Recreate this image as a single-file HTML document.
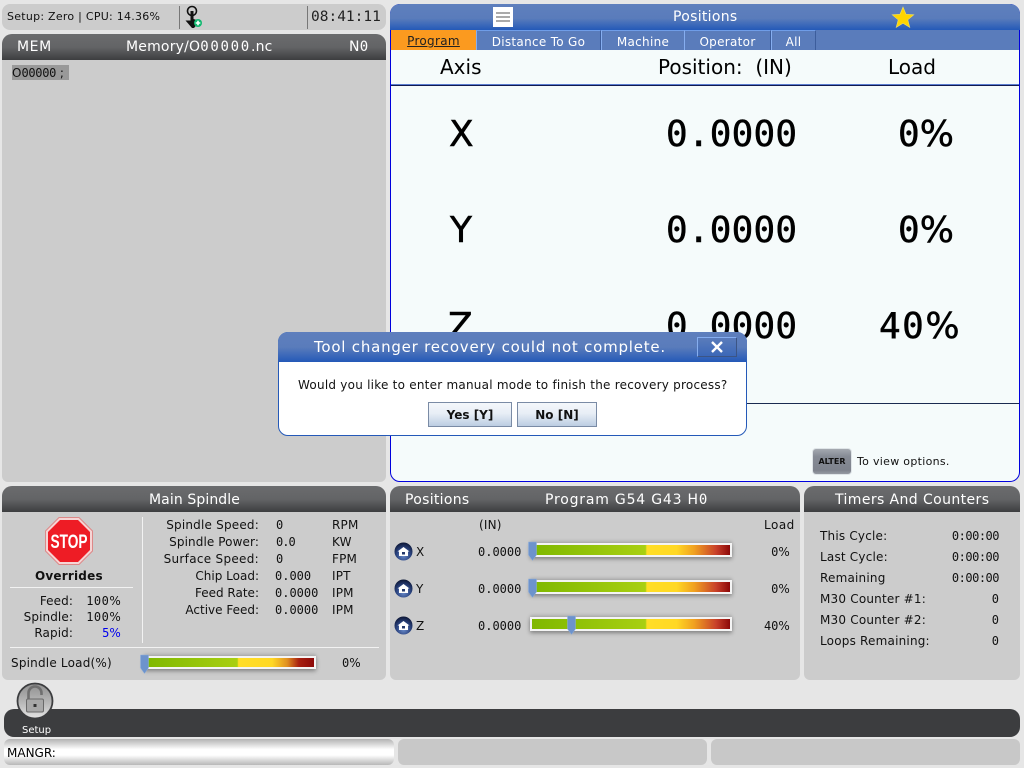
<!DOCTYPE html>
<html><head><meta charset="utf-8"><style>
html,body{margin:0;padding:0;width:1024px;height:768px;overflow:hidden;background:#e6e6e6}
body{position:relative;font-family:"DejaVu Sans","Liberation Sans",sans-serif;font-size:12px;color:#111}
div,svg{position:absolute}
.t{white-space:nowrap;line-height:16px;letter-spacing:.2px}
.t.m,span.m{font-family:"DejaVu Sans Mono","Liberation Mono",monospace;letter-spacing:0}
.r{text-align:right}
.p{background:#cccccc}
.h{background:linear-gradient(#6b6c6e 0,#636466 50%,#3c3d3f 100%);border-radius:10px 10px 0 0;color:#fff}
.h .t{font-size:14px;line-height:26px;top:0}
.lo .t{top:1px}
.bar{background:linear-gradient(90deg,#7fb800 0,#a8cf12 57%,#b5d416 57.5%,#ffde26 58%,#ffd824 73%,#f0a020 82%,#c8402a 93%,#8c0808 100%);border:2px solid #f4f4f4;box-sizing:border-box;box-shadow:0 2px 4px #808080,0 -2px 3px #b0b0b0}
.bar.s{background:linear-gradient(90deg,#7fb800 0,#a8cf12 54%,#b5d416 54.500%,#ffde26 55%,#ffd824 75%,#e09020 84%,#a82010 91%,#8c0808 100%)}
.tab{top:30px;height:20px;background:#5a7cbb;color:#fff;line-height:23px;text-align:center;font-size:12px;letter-spacing:.3px;border-left:1px solid #86aef0;border-top:1px solid #6f9de8;box-sizing:border-box;border-right:1px solid #3c5d9c}
.big{font-size:36px;line-height:44px;color:#000;white-space:nowrap;-webkit-text-stroke:.5px #000}
.big.m{font-family:"DejaVu Sans Mono","Liberation Mono",monospace;letter-spacing:.2px}
.btn{top:402px;height:25px;box-sizing:border-box;border:1px solid #7a8ba5;background:linear-gradient(#f4f7fb,#e8eef6 45%,#bccde2);font-weight:bold;font-size:12px;line-height:24px;text-align:center;color:#111}
</style></head><body>

<!-- status -->
<div class="p" style="left:2px;top:4px;width:384px;height:26px;border-radius:8px"></div>
<div class="t" style="left:7px;top:9px;font-size:11px;letter-spacing:.26px">Setup: Zero | CPU: 14.36%</div>
<div style="left:179px;top:6px;width:1px;height:23px;background:#777"></div>
<div style="left:307px;top:6px;width:1px;height:23px;background:#777"></div>
<svg style="left:184px;top:5px" width="20" height="23" viewBox="0 0 20 23"><circle cx="8" cy="6" r="4.500" fill="none" stroke="#111" stroke-width="1.600"/><path d="M6.500 6h3v8l4.500 1.500-1 4-3 3.500H8l-6.500-7.500H6.500z" fill="#111"/><circle cx="14" cy="18" r="4" fill="#12b870"/><path d="M14 15.700v4.600M11.700 18h4.600" stroke="#fff" stroke-width="1.600"/></svg>
<div class="t m" style="left:311px;top:9px;font-size:14.500px;color:#222">08:41:11</div>

<!-- program panel -->
<div class="p" style="left:2px;top:34px;width:384px;height:448px;border-radius:10px 10px 6px 6px"></div>
<div class="h" style="left:2px;top:34px;width:384px;height:26px">
<div class="t" style="left:15px;letter-spacing:.6px">MEM</div>
<div class="t" style="left:124px">Memory/O<span class="m" style="letter-spacing:1.700px">00000</span>.nc</div>
<div class="t" style="left:347px">N<span class="m">0</span></div>
</div>
<div style="left:12px;top:65px;width:57px;height:15px;background:#999"></div>
<div class="t" style="left:12px;top:65px;font-size:12px;letter-spacing:0">O<span class="m" style="letter-spacing:-.3px">00000</span> ;</div>

<!-- positions panel -->
<div style="left:390px;top:4px;width:630px;height:478px;box-sizing:border-box;background:#f5fbfb;border:1px solid #0000dd;border-radius:10px"></div>
<div style="left:390px;top:4px;width:630px;height:26px;border-radius:10px 10px 0 0;background:linear-gradient(#5e7fbd 0,#5a7cbb 55%,#2459b8 100%)"></div>
<div style="left:391px;top:30px;width:628px;height:20px;background:#5a7cbb"></div>
<div style="left:493px;top:7px;width:20px;height:20px;background:#fff"></div>
<div style="left:496px;top:12px;width:14px;height:2px;background:#aaa"></div>
<div style="left:496px;top:16px;width:14px;height:2px;background:#aaa"></div>
<div style="left:496px;top:20px;width:14px;height:2px;background:#aaa"></div>
<div class="t" style="left:673px;top:9px;font-size:14px;letter-spacing:.3px;color:#fff">Positions</div>
<svg style="left:891px;top:6px" width="24" height="22" viewBox="0 0 24 22"><path d="M12 1l3 7.300 7.800.5-6 5 2 7.600L12 17.200 5.200 21.400l2-7.600-6-5 7.800-.5z" fill="#ffd500" stroke="#f0e060" stroke-width=".6"/></svg>
<div class="tab" style="left:391px;width:85px;background:#fb9a1f;color:#222;border:0"><span style="text-decoration:underline">Program</span></div>
<div class="tab" style="left:476px;width:125px">Distance To Go</div>
<div class="tab" style="left:601px;width:84px">Machine</div>
<div class="tab" style="left:684px;width:87px">Operator</div>
<div class="tab" style="left:771px;width:45px">All</div>
<div class="t" style="left:440px;top:54px;font-size:20px;line-height:26px;letter-spacing:0;color:#000">Axis</div>
<div class="t" style="left:658px;top:54px;font-size:20px;line-height:26px;letter-spacing:0;color:#000">Position:&nbsp; (IN)</div>
<div class="t" style="left:888px;top:54px;font-size:20px;line-height:26px;letter-spacing:0;color:#000">Load</div>
<div style="left:391px;top:84px;width:628px;height:1px;background:#5a7cd0"></div>
<div style="left:391px;top:85px;width:628px;height:1px;background:#111a50"></div>
<div class="big" style="left:449px;top:113px">X</div>
<div class="big m" style="left:666px;top:113px">0.0000</div>
<div class="big" style="left:898px;top:113px"><span class="m">0</span>%</div>
<div class="big" style="left:450px;top:209px">Y</div>
<div class="big m" style="left:666px;top:209px">0.0000</div>
<div class="big" style="left:898px;top:209px"><span class="m">0</span>%</div>
<div class="big" style="left:448px;top:305px">Z</div>
<div class="big m" style="left:666px;top:305px">0.0000</div>
<div class="big" style="left:879px;top:305px"><span class="m" style="letter-spacing:1.500px">40</span>%</div>
<div style="left:391px;top:403px;width:628px;height:1px;background:#1a2a50"></div>
<div style="left:812px;top:448px;width:40px;height:27px;box-sizing:border-box;border:1px solid #dfe5e8;border-radius:4px;background:linear-gradient(#a4a9b0 0,#868b95 30%,#7e838d 85%,#969aa2);color:#111;font-size:8px;font-weight:bold;line-height:25px;text-align:center">ALTER</div>
<div class="t" style="left:857px;top:454px;font-size:11px;letter-spacing:.3px">To view options.</div>

<!-- spindle -->
<div class="p" style="left:2px;top:486px;width:384px;height:194px;border-radius:10px 10px 6px 6px"></div>
<div class="h lo" style="left:2px;top:486px;width:384px;height:26px"><div class="t" style="left:147px;letter-spacing:.1px">Main Spindle</div></div>
<svg style="left:45px;top:517px" width="48" height="48" viewBox="0 0 48 48"><path d="M14 .5h20L47.500 14v20L34 47.500H14L.5 34V14z" fill="#f6d5d5" stroke="#d88"/><path d="M15 3h18l12 12v18L33 45H15L3 33V15z" fill="#ee1c25"/><text x="24" y="31" text-anchor="middle" font-family="Liberation Sans" font-weight="bold" font-size="19" fill="#fff" textLength="37" lengthAdjust="spacingAndGlyphs">STOP</text></svg>
<div class="t" style="left:35px;top:568px;font-size:12px;font-weight:bold;letter-spacing:.2px">Overrides</div>
<div style="left:10px;top:587px;width:123px;height:1px;background:#f2f2f2"></div>
<div style="left:142px;top:517px;width:1px;height:126px;background:#f2f2f2"></div>
<div style="left:10px;top:647px;width:369px;height:1px;background:#f2f2f2"></div>
<div class="t r" style="right:951px;top:593px;letter-spacing:.1px">Feed:</div>
<div class="t r" style="right:951px;top:609px;letter-spacing:.1px">Spindle:</div>
<div class="t r" style="right:951px;top:625px;letter-spacing:.1px">Rapid:</div>
<div class="t r" style="right:903px;top:593px"><span class="m" style="letter-spacing:.5px">100</span>%</div>
<div class="t r" style="right:903px;top:609px"><span class="m" style="letter-spacing:.5px">100</span>%</div>
<div class="t r" style="right:903px;top:625px;color:#0000ee"><span class="m">5</span>%</div>
<div class="t r" style="right:765px;top:517px">Spindle Speed:</div>
<div class="t r" style="right:765px;top:534px;letter-spacing:.1px">Spindle Power:</div>
<div class="t r" style="right:765px;top:551px;letter-spacing:.3px">Surface Speed:</div>
<div class="t r" style="right:765px;top:568px;letter-spacing:0">Chip Load:</div>
<div class="t r" style="right:765px;top:585px;letter-spacing:0">Feed Rate:</div>
<div class="t r" style="right:765px;top:602px;letter-spacing:0">Active Feed:</div>
<div class="t m" style="left:276px;top:517px">0</div>
<div class="t m" style="left:276px;top:534px;letter-spacing:-1px">0.0</div>
<div class="t m" style="left:276px;top:551px">0</div>
<div class="t m" style="left:275px;top:568px">0.000</div>
<div class="t m" style="left:275px;top:585px">0.0000</div>
<div class="t m" style="left:275px;top:602px">0.0000</div>
<div class="t" style="left:332px;top:517px">RPM</div>
<div class="t" style="left:332px;top:534px">KW</div>
<div class="t" style="left:332px;top:551px">FPM</div>
<div class="t" style="left:332px;top:568px">IPT</div>
<div class="t" style="left:332px;top:585px">IPM</div>
<div class="t" style="left:332px;top:602px">IPM</div>
<div class="t" style="left:11px;top:655px">Spindle Load(%)</div>
<div class="bar s" style="left:144px;top:656px;width:172px;height:13px"></div>
<svg style="left:140px;top:654px" width="9" height="20" viewBox="0 0 9 20"><path d="M.5 1h8v13l-4 5.500-4-5.500z" fill="#6d93cc" stroke="#8fb0dd" stroke-width=".5"/></svg>
<div class="t" style="left:342px;top:655px"><span class="m">0</span>%</div>

<!-- axis positions -->
<div class="p" style="left:390px;top:486px;width:410px;height:194px;border-radius:10px 10px 6px 6px"></div>
<div class="h lo" style="left:390px;top:486px;width:410px;height:26px">
<div class="t" style="left:15px;letter-spacing:.3px">Positions</div>
<div class="t" style="left:155px;letter-spacing:.8px">Program G54 G43 H<span class="m">0</span></div>
</div>
<div class="t" style="left:479px;top:517px">(IN)</div>
<div class="t" style="left:764px;top:517px;letter-spacing:.5px">Load</div>

<svg style="left:394px;top:542px" width="19" height="19" viewBox="0 0 19 19"><defs><radialGradient id="hg" cx=".5" cy=".72" r=".7"><stop offset="0" stop-color="#6c8dcc"/><stop offset=".55" stop-color="#2b4480"/><stop offset="1" stop-color="#0e1838"/></radialGradient></defs><circle cx="9.500" cy="9.500" r="9" fill="url(#hg)"/><path d="M3.500 9.500 9.500 5l6 4.500h-1.500V14h-9V9.500z" fill="#fff"/><rect x="8" y="10" width="3" height="2.500" fill="#24386b"/></svg>
<svg style="left:394px;top:579px" width="19" height="19" viewBox="0 0 19 19"><circle cx="9.500" cy="9.500" r="9" fill="url(#hg)"/><path d="M3.500 9.500 9.500 5l6 4.500h-1.500V14h-9V9.500z" fill="#fff"/><rect x="8" y="10" width="3" height="2.500" fill="#24386b"/></svg>
<svg style="left:394px;top:616px" width="19" height="19" viewBox="0 0 19 19"><circle cx="9.500" cy="9.500" r="9" fill="url(#hg)"/><path d="M3.500 9.500 9.500 5l6 4.500h-1.500V14h-9V9.500z" fill="#fff"/><rect x="8" y="10" width="3" height="2.500" fill="#24386b"/></svg>
<div class="t" style="left:416px;top:544px">X</div>
<div class="t" style="left:416px;top:581px">Y</div>
<div class="t" style="left:416px;top:618px">Z</div>
<div class="t m" style="left:478px;top:544px">0.0000</div>
<div class="t m" style="left:478px;top:581px">0.0000</div>
<div class="t m" style="left:478px;top:618px">0.0000</div>
<div class="bar" style="left:530px;top:543px;width:202px;height:14px"></div>
<div class="bar" style="left:530px;top:580px;width:202px;height:14px"></div>
<div class="bar" style="left:530px;top:617px;width:202px;height:14px"></div>
<svg style="left:528px;top:541px" width="9" height="20" viewBox="0 0 9 20"><path d="M.5 1h8v13l-4 5.500-4-5.500z" fill="#6d93cc" stroke="#8fb0dd" stroke-width=".5"/></svg>
<svg style="left:528px;top:578px" width="9" height="20" viewBox="0 0 9 20"><path d="M.5 1h8v13l-4 5.500-4-5.500z" fill="#6d93cc" stroke="#8fb0dd" stroke-width=".5"/></svg>
<svg style="left:567px;top:615px" width="9" height="20" viewBox="0 0 9 20"><path d="M.5 1h8v13l-4 5.500-4-5.500z" fill="#6d93cc" stroke="#8fb0dd" stroke-width=".5"/></svg>
<div class="t r" style="right:234px;top:544px"><span class="m">0</span>%</div>
<div class="t r" style="right:234px;top:581px"><span class="m">0</span>%</div>
<div class="t r" style="right:234px;top:618px"><span class="m">40</span>%</div>

<!-- timers -->
<div class="p" style="left:804px;top:486px;width:216px;height:194px;border-radius:10px 10px 6px 6px"></div>
<div class="h lo" style="left:804px;top:486px;width:216px;height:26px"><div class="t" style="left:31px;letter-spacing:.4px">Timers And Counters</div></div>
<div class="t" style="left:820px;top:528px">This Cycle:</div>
<div class="t" style="left:820px;top:549px">Last Cycle:</div>
<div class="t" style="left:820px;top:570px">Remaining</div>
<div class="t" style="left:820px;top:591px">M30 Counter #1:</div>
<div class="t" style="left:820px;top:612px">M30 Counter #2:</div>
<div class="t" style="left:820px;top:633px">Loops Remaining:</div>
<div class="t m r" style="right:25px;top:528px;letter-spacing:-.5px">0:00:00</div>
<div class="t m r" style="right:25px;top:549px;letter-spacing:-.5px">0:00:00</div>
<div class="t m r" style="right:25px;top:570px;letter-spacing:-.5px">0:00:00</div>
<div class="t m r" style="right:25px;top:591px">0</div>
<div class="t m r" style="right:25px;top:612px">0</div>
<div class="t m r" style="right:25px;top:633px">0</div>

<!-- bottom -->
<div style="left:4px;top:709px;width:1016px;height:28px;background:#3c3d3f;border-radius:10px"></div>
<svg style="left:16px;top:682px" width="38" height="38" viewBox="0 0 38 38"><defs><linearGradient id="lg" x1="0" y1="0" x2="0" y2="1"><stop offset="0" stop-color="#8f8f8f"/><stop offset=".55" stop-color="#b8b8b8"/><stop offset="1" stop-color="#e4e4e4"/></linearGradient></defs><circle cx="19" cy="19" r="17.500" fill="url(#lg)" stroke="#3c3d3f" stroke-width="1.800"/><path d="M12.500 17v-6a6.500 6.500 0 0 1 13 0v2" fill="none" stroke="#6f6f6f" stroke-width="2.600"/><rect x="10.500" y="17" width="17" height="13" rx="1.500" fill="#a8a8a8" stroke="#6a6a6a"/><rect x="17.500" y="22" width="3" height="3" fill="#333"/></svg>
<div class="t" style="left:22px;top:723px;font-size:10px;letter-spacing:0;color:#fff">Setup</div>
<div style="left:4px;top:739px;width:390px;height:26px;border-radius:6px;background:linear-gradient(#b4b4b4 0,#dcdcdc 22%,#fff 40%,#fff 62%,#d8d8d8 82%,#b8b8b8 100%)"></div>
<div class="t" style="left:7px;top:745px;letter-spacing:0;color:#000">MANGR:</div>
<div style="left:398px;top:739px;width:309px;height:26px;border-radius:6px;background:#c8c8c8"></div>
<div style="left:711px;top:739px;width:309px;height:26px;border-radius:6px;background:#c8c8c8"></div>

<!-- dialog -->
<div style="left:278px;top:332px;width:469px;height:104px;box-sizing:border-box;background:#fff;border:1px solid #2459b8;border-radius:10px"></div>
<div style="left:278px;top:332px;width:469px;height:30px;border-radius:10px 10px 0 0;background:linear-gradient(#5e7fbd 0,#5a7cbb 50%,#2459b8 100%)"></div>
<div class="t" style="left:314px;top:339px;font-size:15px;letter-spacing:.78px;color:#fff">Tool changer recovery could not complete.</div>
<div style="left:697px;top:337px;width:40px;height:20px;box-sizing:border-box;background:linear-gradient(#5a7cbb,#3c68b8);border:1px solid #3c5585;border-top-color:#86aef0;border-left-color:#86aef0"></div>
<svg style="left:710px;top:340px" width="14" height="14" viewBox="0 0 14 14"><path d="M2 2l10 10M12 2L2 12" stroke="#fff" stroke-width="2.400"/></svg>
<div class="t" style="left:298px;top:377px;letter-spacing:.235px">Would you like to enter manual mode to finish the recovery process?</div>
<div class="btn" style="left:428px;width:84px">Yes [Y]</div>
<div class="btn" style="left:517px;width:80px">No [N]</div>
</body></html>
